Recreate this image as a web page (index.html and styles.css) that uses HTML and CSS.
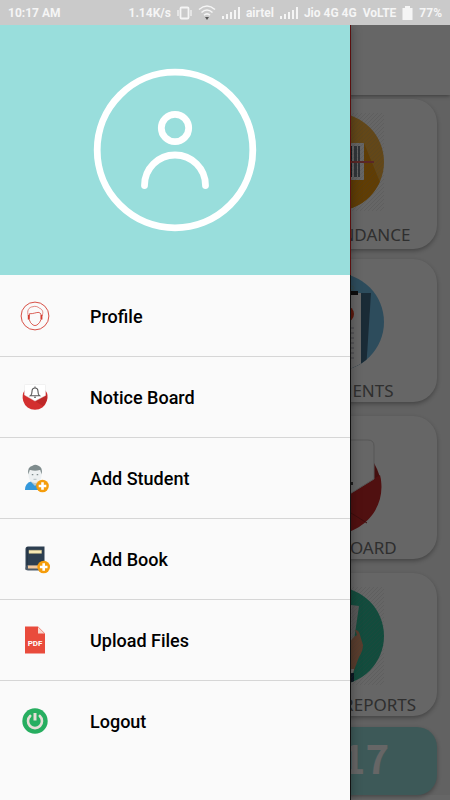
FILE: index.html
```html
<!DOCTYPE html>
<html lang="en">
<head>
<meta charset="utf-8">
<meta name="viewport" content="width=device-width, initial-scale=1">
<title>Menu</title>
<link rel="stylesheet" href="styles.css">
</head>
<body>
<div class="status">
  <span class="clock">10:17 AM</span>
  <span>1.14K/s</span>
  <svg width="15" height="14" viewBox="0 0 15 14" fill="none" stroke="currentColor"><rect x="3.5" y="1.5" width="8" height="11" rx="1" stroke-width="1.8"/><path d="M1 4v6M14 4v6" stroke-width="1.2"/></svg>
  <svg width="18" height="17" viewBox="0 0 18 17" fill="none" stroke="currentColor" stroke-width="1.5"><path d="M1 5.500Q9-1.500 17 5.500M3.500 8.500Q9 3.500 14.500 8.500M6 11.300Q9 8.500 12 11.300"/><path d="M7 13h4l-2 3z" fill="#555" stroke="none"/></svg>
  <svg width="18" height="14" viewBox="0 0 18 14" fill="currentColor"><path d="M0 10h2v3H0zM4 8h2v5H4zM8 6h2v7H8zM12 4h2v9h-2zM16 1h2v12h-2z"/></svg>
  <span>airtel</span>
  <svg width="18" height="14" viewBox="0 0 18 14" fill="currentColor"><path d="M0 10h2v3H0zM4 8h2v5H4zM8 6h2v7H8zM12 4h2v9h-2zM16 1h2v12h-2z"/></svg>
  <span>Jio 4G 4G</span>
  <span>VoLTE</span>
  <svg width="11" height="14" viewBox="0 0 11 14" fill="currentColor"><path d="M3 0h5v2h2.500v12H.5V2H3z"/></svg>
  <span>77%</span>
</div>

<div class="screen">
  <main class="home">
    <header class="toolbar"></header>
    <div class="cards">
      <section class="card card-first">
        <svg width="98" height="98" viewBox="0 0 98 98">
          <defs>
            <pattern id="hatch" width="4" height="4" patternUnits="userSpaceOnUse"><path d="M0 4L4 0" stroke="#999" stroke-width=".5" opacity=".35"/></pattern>
            <clipPath id="disc"><circle cx="49" cy="49" r="49"/></clipPath>
          </defs>
          <g clip-path="url(#disc)"><path fill="#f7b23c" d="M0 0h98v98H0z"/><path fill="#ef9a0b" d="M0 68h64l14-38 18 44v24H0z"/></g>
          <path fill="#fff" d="M20 30h58v37H20z"/>
          <path fill="#34495e" d="M24 33h3v31h-3zM30 33h5v31h-5zM38 33h3v31h-3zM44 33h6v31h-6zM53 33h3v31h-3zM60 33h6v31h-6z"/><path fill="#78838c" d="M68 33h3v31h-3zM72 33h2v31h-2z"/>
          <path fill="#e4605c" d="M10 48h78v2H10z"/>
          <path fill="url(#hatch)" d="M0 0h98v98H0z"/>
        </svg>
        <h2>TAKE ATTENDANCE</h2>
      </section>
      <section class="card">
        <svg width="98" height="98" viewBox="0 0 98 98">
          <g clip-path="url(#disc)">
            <path fill="#72bde6" d="M0 0h98v98H0z"/><path fill="#426c88" d="M20 20h65l-5 78H20z"/><path fill="#fff" d="M20 20h55v75H20z"/>
            <path stroke="#aab" d="M25 55h43M25 60h43M25 65h43M25 70h43M25 75h43M25 80h43M25 85h43"/>
          </g>
          <path fill="#222" d="M61 18h11v4H61z"/><circle cx="66" cy="15" r="2" fill="none" stroke="#8bb"/><circle cx="60" cy="41" r="8" fill="#e83f20"/>
        </svg>
        <h2>ASSIGNMENTS</h2>
      </section>
      <section class="card">
        <svg width="98" height="98" viewBox="0 0 98 98">
          <path fill="#a92323" d="M87 31Q96 47 95 58L60 80z"/><path fill="#c82828" d="M3 43l46 30 45-28C102 78 76 104 49 104S-2 80 3 43z"/><path d="M49 73l32 20" stroke="#962020" fill="none"/>
          <path fill="#fff" stroke="#d5d5d5" d="M9 14q0-4 5-4h68q6 0 6 6v33L49 73 9 49z"/><path fill="#555" d="M64 52h3v3h-3z"/>
        </svg>
        <h2>NOTICE BOARD</h2>
      </section>
      <section class="card">
        <svg width="98" height="98" viewBox="0 0 98 98">
          <g clip-path="url(#disc)">
            <path fill="#2fbd98" d="M0 0h98v98H0z"/><path fill="#ddd" d="M50 16l23 3-8 55H48z"/><path fill="#f3f3f3" d="M25 18h41v56H25z"/>
            <path fill="#de9871" d="M62 84l1-26q2-7 8-10l-2-5q4 0 5 5l3 10q0 6-4 12l-6 16z"/><path fill="#fff" d="M57 82h11l-1 5H57z"/><path fill="#213d57" d="M55 86h13v12H55z"/>
          </g>
          <path fill="url(#hatch)" d="M0 0h98v98H0z"/>
        </svg>
        <h2>STUDENTS REPORTS</h2>
      </section>
    </div>
    <div class="time">10:17</div>
  </main>
  <div class="scrim"></div>

  <nav class="drawer" aria-label="Main menu">
    <div class="account">
      <svg width="164" height="164" viewBox="0 0 164 164" fill="none" stroke="#fff" stroke-width="6.800"><circle cx="82" cy="82" r="77.800"/><circle cx="82" cy="60" r="13.700"/><path d="M51.500 117.500a30.500 30.500 0 0 1 61 0" stroke-linecap="round"/></svg>
    </div>
    <ul class="menu">
      <li><a href="#profile">
        <svg width="30" height="30" viewBox="0 0 30 30" fill="none" stroke="#d23b30"><circle cx="15" cy="15" r="13.900" stroke-width=".9"/><path d="M8.500 15C6.500 10 8.500 6 13 5.700c2-.8 4.800-.2 6.500 1.500 3.500 1.300 4 4.500 2.500 7.800" stroke-width=".6"/><path d="M9.500 12.700c4 .3 6.500-1.500 9.500-1.300l2 1.600v5.500q-1 3.500-4 5.500-2 1.200-4 0-3-2-3.800-5.500z" stroke-width=".8"/><path d="M8.600 14v4.500M21.600 14v4.500" stroke-width="1.600"/></svg>
        Profile</a></li>
      <li><a href="#notices">
        <svg width="30" height="30" viewBox="0 0 30 30"><path fill="#d32f2f" d="M4.500 8.500L25.500 8.500Q29 13 26.800 19A12.300 12.300 0 0 1 3.200 19Q1.500 13 4.500 8.500z"/><path fill="#bd2828" d="M15 19l11.500-6.500q2 6-3.500 11.500z"/><path fill="#fff" stroke="#e5e5e5" stroke-width=".5" d="M4.500 3.500q0-1 1-1h19q1 0 1 1v10L15 19 4.500 13z"/><path fill="none" stroke="#555" stroke-width="1.100" d="M10.500 13.700q1.500-1 1.500-4.200 0-3.500 3-3.500t3 3.500q0 3.200 1.500 4.200zM15 4.500V6M14 15.200h2"/></svg>
        Notice Board</a></li>
      <li><a href="#add-student">
        <svg width="30" height="30" viewBox="0 0 30 30"><path fill="#3498db" d="M5 27q0-7 6-8.500h8q6 1.500 6 8.500z"/><path fill="#bdc9cc" d="M11.500 15h7v4.500L15 23l-3.500-3.500z"/><path fill="#ecf0f1" d="M8.500 8h13v4q0 7-6.500 8-6.500-1-6.500-8z"/><path fill="#7f8c8d" d="M8.300 11.500Q7 4 12.500 2.800 15 1 18 2.500q5 1.500 3.700 9l-1.500-4.500q-5 1.500-10.400 0z"/><path fill="#7f8c8d" d="M11.800 11h1.500v1.200h-1.500zM16.700 11h1.500v1.200h-1.500z"/><path stroke="#b4bfc2" d="M13.500 16.300h3"/><circle cx="22.500" cy="23" r="6.300" fill="#f59d0c"/><path stroke="#fff" stroke-width="2.600" d="M22.500 19.200v7.600M18.700 23h7.600"/></svg>
        Add Student</a></li>
      <li><a href="#add-book">
        <svg width="30" height="30" viewBox="0 0 30 30"><path fill="#2c3e50" d="M5.500 5q0-2.500 2.500-2.500h16.500V24H8l-2.500 2z"/><path fill="#4c5a68" d="M7 21h17v5.500H8Q5.500 26.500 5.500 24z"/><path fill="#f0c79b" d="M8 21.500h16v3H8z"/><path fill="#243443" d="M7.800 3v18H7V3z"/><path fill="#f8eab6" stroke="#d9c68e" stroke-width=".5" d="M9 6.300h12.500v3H9z"/><circle cx="23.700" cy="23" r="6.300" fill="#f59d0c"/><path stroke="#fff" stroke-width="2.600" d="M23.700 19.200v7.600M19.900 23h7.600"/></svg>
        Add Book</a></li>
      <li><a href="#upload">
        <svg width="30" height="30" viewBox="0 0 30 30"><path fill="#e94b3c" d="M5 1.500h13l7 7V28.500H5z"/><path fill="#f9d5ce" d="M18 2v6.500h6.500z"/><text class="pdf" x="15" y="21" text-anchor="middle">PDF</text></svg>
        Upload Files</a></li>
      <li><a href="#logout">
        <svg width="30" height="30" viewBox="0 0 30 30" fill="none" stroke="#e5ded6" stroke-width="2.600"><circle cx="15" cy="15" r="12.700" fill="#27ae60" stroke="none"/><path d="M10.200 10a7 7 0 1 0 9.600 0" stroke-linecap="round"/><path d="M15 7v7.500" stroke-width="3"/></svg>
        Logout</a></li>
    </ul>
  </nav>
</div>
</body>
</html>
```
FILE: styles.css
```css
* { box-sizing: border-box; }

body {
  margin: 0;
  min-height: 100vh;
  display: flex;
  flex-direction: column;
  font-family: Roboto, "Liberation Sans", sans-serif;
}

.status {
  display: flex;
  align-items: center;
  gap: 6px;
  height: 25px;
  padding: 0 8px;
  background: #cacaca;
  color: #f5f5f5;
  font-size: 12px;
  font-weight: 700;
  white-space: nowrap;
}
.status svg { flex: none; }
.clock { margin-right: auto; }

.screen {
  position: relative;
  flex: 1;
  overflow: hidden;
}

.home {
  min-height: 100%;
  background: #f4f4f4;
}
.toolbar {
  height: 70px;
  background: #fff;
  box-shadow: 0 1px 4px rgba(0, 0, 0, .4);
}
.cards {
  display: flex;
  flex-direction: column;
  gap: 14px;
  margin-left: 50%;
  padding: 4px 13px 11px 8px;
}
.card {
  display: flex;
  flex-direction: column;
  align-items: center;
  gap: 8px;
  height: 143px;
  padding-top: 14px;
  border-radius: 24px;
  background: #fff;
  box-shadow: 0 2px 4px rgba(0, 0, 0, .3);
}
.card-first {
  gap: 12px;
  height: 150px;
  margin-bottom: -4px;
}
.card svg {
  flex: none;
  overflow: visible;
}
.card h2 {
  margin: 0;
  color: #757575;
  font: 400 17px/24px "Noto Sans", sans-serif;
  white-space: nowrap;
}
.time {
  margin: 0 13px;
  padding: 0 48px 8px 0;
  border-radius: 20px;
  background: #99dedc;
  box-shadow: 0 2px 4px rgba(0, 0, 0, .3);
  color: #fff;
  font: 700 40px/60px "Noto Sans CJK SC", sans-serif;
  text-align: right;
}

.scrim {
  position: absolute;
  inset: 0;
  background: rgba(0, 0, 0, .6);
}

.drawer {
  position: absolute;
  top: 0;
  bottom: 0;
  left: 0;
  width: calc(100% - 99px);
  border-right: 1px solid #111;
  background: #fafafa;
  box-shadow: 0 0 10px rgba(0, 0, 0, .35);
}
.account {
  display: flex;
  align-items: center;
  justify-content: center;
  height: 250px;
  margin-right: -1px;
  border-right: 1px solid #5a1010;
  background: #99dedc;
}
.menu {
  margin: 0;
  padding: 1px 0 0;
  list-style: none;
}
.menu li + li { border-top: 1px solid #d6d6d6; }
.menu a {
  display: flex;
  align-items: center;
  gap: 40px;
  height: 80px;
  padding-left: 20px;
  color: #000;
  font-size: 18px;
  font-weight: 500;
  text-decoration: none;
}
.pdf {
  fill: #fff;
  font: 700 8px Roboto, sans-serif;
}
```
